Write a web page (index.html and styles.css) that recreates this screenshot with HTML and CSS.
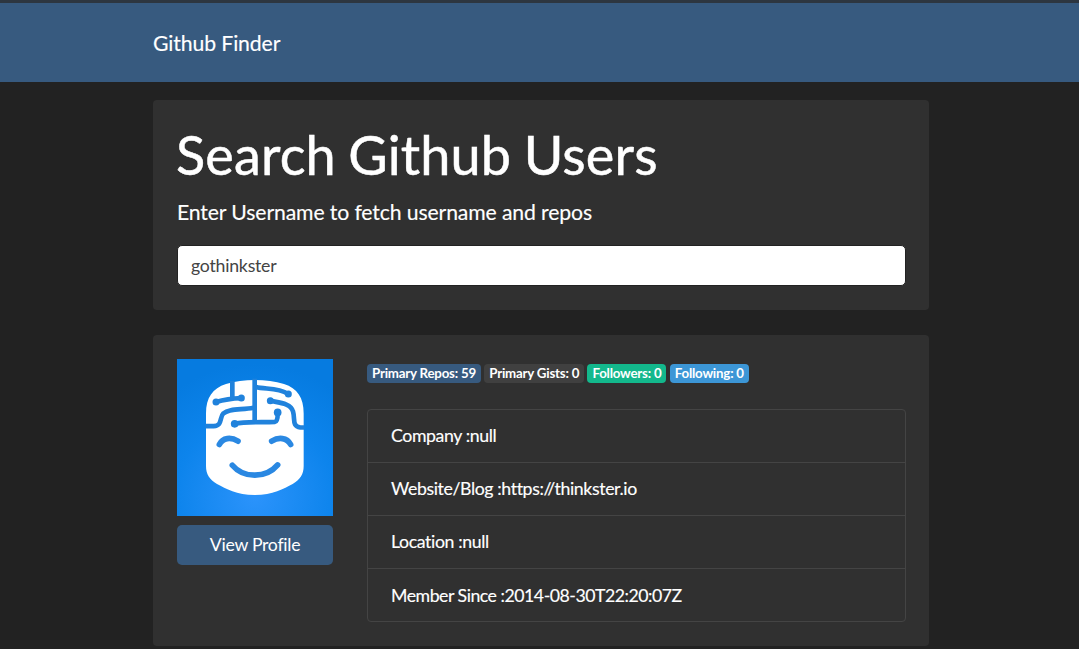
FILE: index.html
```html
<!DOCTYPE html>
<html lang="en">
<head>
<meta charset="utf-8">
<title>Github Finder</title>
<link rel="stylesheet" href="styles.css">
</head>
<body>
<nav class="navbar"><div class="container"><a class="brand">Github Finder</a></div></nav>
<main class="container">
  <section class="card search">
    <h1 class="title">Search Github Users</h1>
    <p class="lead">Enter Username to fetch username and repos</p>
    <input class="field" type="text" value="gothinkster">
  </section>
  <section class="card profile">
    <div class="side">
      <svg class="avatar" viewBox="21 27 468 470" preserveAspectRatio="none">
        <defs><radialGradient id="sky" cx=".5" cy=".88" r=".85"><stop offset="0" stop-color="#2b93fb"/><stop offset=".6" stop-color="#0d84ec"/><stop offset="1" stop-color="#067be0"/></radialGradient></defs>
        <rect x="21" y="27" width="468" height="470" fill="url(#sky)"/>
        <path fill="#fff" d="M108 190C108 143 128 115 168 102C220 86 290 86 342 102C382 115 401 143 401 190V347C401 372 390 388 368 401C341 415 309 434 254 434C200 434 168 415 141 401C119 388 108 372 108 347Z"/>
        <g fill="none" stroke="#2082dc" stroke-width="14" stroke-linejoin="round">
          <path d="M187 93V146M138 156Q172 145 214 144"/>
          <path d="M254 86V214"/>
          <path d="M106 228H131C158 227 148 202 160 190C178 174 216 180 250 173"/>
          <path d="M258 111C285 119 322 110 355 132"/>
          <path d="M301 152C330 158 363 160 369 184C376 208 365 228 391 232H403"/>
          <path d="M194 221C230 214 275 217 315 215Q324 213 323 187"/>
        </g>
        <g fill="#2082dc"><circle cx="138" cy="156" r="10.500"/><circle cx="214" cy="144" r="10.500"/><circle cx="355" cy="132" r="10.500"/><circle cx="301" cy="152" r="10.500"/><circle cx="194" cy="221" r="11.500"/><circle cx="323" cy="187" r="11.500"/></g>
        <g fill="none" stroke="#2a88e2" stroke-width="17" stroke-linecap="round">
          <path d="M148 283C158 262 183 260 204 273"/>
          <path d="M305 273C326 260 351 262 362 283"/>
          <path d="M187 345C221 385 288 385 323 344"/>
        </g>
      </svg>
      <a class="button">View Profile</a>
    </div>
    <div class="details">
      <div class="badges"><span class="badge primary">Primary Repos: 59</span><span class="badge dark">Primary Gists: 0</span><span class="badge success">Followers: 0</span><span class="badge info">Following: 0</span></div>
      <ul class="list">
        <li class="item">Company :null</li>
        <li class="item">Website/Blog :https://thinkster.io</li>
        <li class="item">Location :null</li>
        <li class="item">Member Since :2014-08-30T22:20:07Z</li>
      </ul>
    </div>
  </section>
</main>
</body>
</html>
```
FILE: styles.css
```css
* { box-sizing: border-box; }
body { margin: 0; height: 649px; overflow: hidden; background: #222; color: #fff; font-family: Lato, sans-serif; font-size: 17.7px; line-height: 26px; }
.container { width: 776px; margin: 0 0 0 153px; }
.navbar { height: 82px; padding-top: 2px; border-top: 3px solid #2d3640; background: #375a7f; display: flex; align-items: center; }
.brand { font-size: 21.2px; letter-spacing: -.1px; -webkit-text-stroke: .15px #fff; }
.card { background: #303030; border-radius: 4px; padding: 24px; }
.search { margin-top: 18px; height: 210px; padding-top: 23px; }
.title { margin: 0 0 0 -1px; font-size: 54px; font-weight: 400; line-height: 64px; letter-spacing: .15px; word-spacing: -1.5px; -webkit-text-stroke: .5px #fff; }
.lead { margin: 12px 0 20px; font-size: 21.2px; line-height: 26px; letter-spacing: -.12px; -webkit-text-stroke: .15px #fff; }
.field { display: block; width: 729px; height: 41px; border: 1px solid #222; border-radius: 5px; background: #fff; color: #444; padding: 0 13px; font: 17.7px Lato, sans-serif; letter-spacing: -.23px; outline: none; }
.profile { margin-top: 25px; height: 311px; display: flex; gap: 34px; }
.side { width: 156px; }
.avatar { display: block; width: 156px; height: 157px; }
.button { display: block; margin-top: 9px; height: 40px; line-height: 40px; border-radius: 5px; background: #375a7f; text-align: center; letter-spacing: -.28px; }
.details { width: 539px; flex: none; }
.badges { display: flex; gap: 3.3px; margin-top: 5px; }
.badge { height: 19px; line-height: 19px; padding: 0 5px; border-radius: 4px; font-size: 13.3px; font-weight: 700; white-space: nowrap; letter-spacing: -.21px; }
.primary { background: #375a7f; }
.dark { background: #404040; }
.success { background: #13b88c; }
.info { background: #3c96d6; }
.list { list-style: none; margin: 26px 0 0; padding: 0; border: 1px solid #444; border-radius: 4px; }
.item { height: 53px; line-height: 52px; padding-left: 23px; border-bottom: 1px solid #444; letter-spacing: -.38px; -webkit-text-stroke: .15px #fff; }
.item:last-child { border-bottom: 0; height: 52px; line-height: 54px; letter-spacing: -.47px; }
```
